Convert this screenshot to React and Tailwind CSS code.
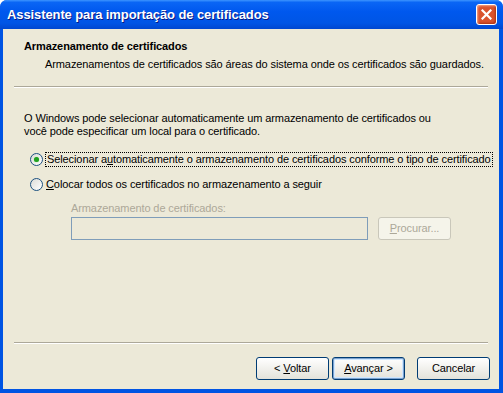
import React from 'react';

const font = { fontFamily: '"Liberation Sans", Arial, sans-serif' };

const Radio = ({ checked }) => (
    <span className="w-[13px] h-[13px] rounded-full border border-[#1C5180] bg-[linear-gradient(135deg,#DCDCD7,#FFFFFF)] shrink-0 flex items-center justify-center">
        {checked && <span className="w-[5px] h-[5px] rounded-full bg-[#21A121] shadow-[0_0_1px_#6BD66B]" />}
    </span>
);

const XpButton = ({ children, primary, disabled }) => (
    <button
        className={
            'w-[73px] h-[23px] rounded-[3px] border text-[11px] flex items-center justify-center ' +
            (disabled
                ? 'border-[#C9C7BA] bg-[#F5F4EA] text-[#ACA899]'
                : primary
                  ? 'border-[#003C74] bg-[linear-gradient(to_bottom,#FFFFFF,#E3E2DA)] text-black shadow-[inset_0_0_0_1px_#7DA2CE,inset_0_0_0_2px_#CEE7FF]'
                  : 'border-[#003C74] bg-[linear-gradient(to_bottom,#FFFFFF,#E3E2DA)] text-black')
        }
    >
        <span className="whitespace-pre">{children}</span>
    </button>
);

export default function App() {
    return (
        <div className="w-[503px] h-[393px] flex flex-col bg-[#0054E3] rounded-t-[7px] overflow-hidden" style={font}>
            <div className="h-[29px] shrink-0 flex items-center justify-between pl-[7px] pr-[6px] bg-[linear-gradient(to_bottom,#3D95FF_0%,#0A66F5_8%,#0058EE_40%,#0055E5_80%,#0047D0_100%)]">
                <span className="text-white font-bold text-[13px] tracking-[-0.1px] [text-shadow:1px_1px_0_#0A1883]">
                    Assistente para importação de certificados
                </span>
                <div className="w-[21px] h-[21px] rounded-[3px] border border-white bg-[#D9532E] shadow-[inset_1px_1px_2px_#F4A58A,inset_-1px_-1px_2px_#A82A0C] flex items-center justify-center">
                    <svg width="11" height="11" viewBox="0 0 11 11">
                        <path d="M1.5 1.5 L9.5 9.5 M9.5 1.5 L1.5 9.5" stroke="white" strokeWidth="2.2" strokeLinecap="square" />
                    </svg>
                </div>
            </div>

            <div className="flex-1 ml-[3px] mr-[4px] mb-[4px] bg-[#ECE9D8] flex flex-col text-[11px] leading-[13px] tracking-[-0.1px] text-black">
                <div className="pt-[11px] pl-[21px]">
                    <div className="font-bold">Armazenamento de certificados</div>
                    <div className="mt-[5px] pl-[21px]">
                        Armazenamentos de certificados são áreas do sistema onde os certificados são guardados.
                    </div>
                </div>
                <div className="mt-[15px] mx-[11px] border-t border-t-[#ACA899] border-b border-b-white" />

                <div className="pl-[21px] mt-[24px]">
                    <div>O Windows pode selecionar automaticamente um armazenamento de certificados ou</div>
                    <div>você pode especificar um local para o certificado.</div>
                </div>

                <div className="flex items-center gap-[2px] pl-[27px] mt-[14px] h-[15px]">
                    <Radio checked />
                    <span className="border border-dotted border-black px-[1px] h-[15px] flex items-center whitespace-pre">
                        <span>
                            Selecionar a<u>u</u>tomaticamente o armazenamento de certificados conforme o tipo de certificado
                        </span>
                    </span>
                </div>
                <div className="flex items-center gap-[3px] pl-[27px] mt-[10px] h-[15px]">
                    <Radio />
                    <span>
                        <u>C</u>olocar todos os certificados no armazenamento a seguir
                    </span>
                </div>

                <div className="pl-[68px] mt-[10px] text-[#ACA899]">Armazenamento de certificados:</div>
                <div className="flex items-center pl-[68px] mt-[2px] gap-[10px]">
                    <div className="w-[297px] h-[23px] border border-[#7F9DB9] bg-[#ECE9D8]" />
                    <XpButton disabled>
                        <u>P</u>rocurar...
                    </XpButton>
                </div>

                <div className="flex-1" />
                <div className="mx-[11px] border-t border-t-[#ACA899] border-b border-b-white" />
                <div className="flex justify-end items-center mt-[13px] mb-[9px] pr-[9px]">
                    <XpButton>
                        {'< '}
                        <u>V</u>oltar
                    </XpButton>
                    <div className="w-[3px]" />
                    <XpButton primary>
                        <u>A</u>vançar{' >'}
                    </XpButton>
                    <div className="w-[12px]" />
                    <XpButton>Cancelar</XpButton>
                </div>
            </div>
        </div>
    );
}
